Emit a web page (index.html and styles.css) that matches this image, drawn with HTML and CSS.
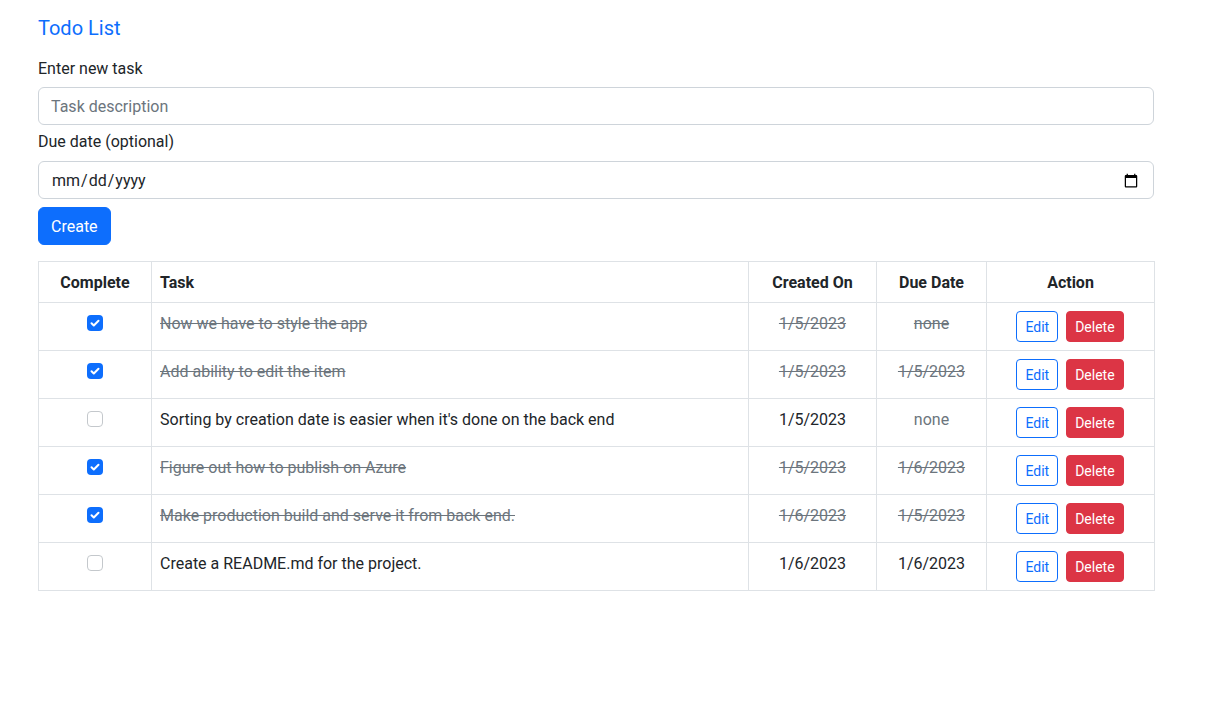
FILE: index.html
```html
<!DOCTYPE html>
<html lang="en">
<head>
<meta charset="utf-8">
<title>Todo List</title>
<link rel="stylesheet" href="styles.css">
</head>
<body>
<div class="container">
  <h1 class="title">Todo List</h1>
  <form class="new-task">
    <label class="label label-desc" for="desc">Enter new task</label>
    <input class="field field-desc" id="desc" type="text" placeholder="Task description">
    <label class="label label-date" for="due">Due date (optional)</label>
    <input class="field field-date" id="due" type="date">
    <button class="btn btn-primary" type="button">Create</button>
  </form>
  <table class="todo-table">
    <colgroup>
      <col class="c-complete"><col class="c-task"><col class="c-created"><col class="c-due"><col class="c-action">
    </colgroup>
    <thead>
      <tr>
        <th class="center">Complete</th>
        <th>Task</th>
        <th class="center">Created On</th>
        <th class="center">Due Date</th>
        <th class="center">Action</th>
      </tr>
    </thead>
    <tbody>
      <tr class="done">
        <td class="center"><span class="check checked"><svg viewBox="0 0 16 16" width="16" height="16"><rect x="0" y="0" width="16" height="16" rx="4" fill="#0d6efd"/><path d="M4.5 8.2l2.3 2.3 4.7-4.7" fill="none" stroke="#fff" stroke-width="2" stroke-linecap="round" stroke-linejoin="round"/></svg></span></td>
        <td><span class="strike">Now we have to style the app</span></td>
        <td class="center"><span class="strike">1/5/2023</span></td>
        <td class="center"><span class="strike">none</span></td>
        <td class="center action-cell"><div class="actions"><button class="btn btn-sm btn-outline" type="button">Edit</button><button class="btn btn-sm btn-danger" type="button">Delete</button></div></td>
      </tr>
      <tr class="done">
        <td class="center"><span class="check checked"><svg viewBox="0 0 16 16" width="16" height="16"><rect x="0" y="0" width="16" height="16" rx="4" fill="#0d6efd"/><path d="M4.5 8.2l2.3 2.3 4.7-4.7" fill="none" stroke="#fff" stroke-width="2" stroke-linecap="round" stroke-linejoin="round"/></svg></span></td>
        <td><span class="strike">Add ability to edit the item</span></td>
        <td class="center"><span class="strike">1/5/2023</span></td>
        <td class="center"><span class="strike">1/5/2023</span></td>
        <td class="center action-cell"><div class="actions"><button class="btn btn-sm btn-outline" type="button">Edit</button><button class="btn btn-sm btn-danger" type="button">Delete</button></div></td>
      </tr>
      <tr>
        <td class="center"><span class="check"><svg viewBox="0 0 16 16" width="16" height="16"><rect x="0.5" y="0.5" width="15" height="15" rx="3.5" fill="#fff" stroke="#c4c8cc"/></svg></span></td>
        <td>Sorting by creation date is easier when it's done on the back end</td>
        <td class="center">1/5/2023</td>
        <td class="center muted">none</td>
        <td class="center action-cell"><div class="actions"><button class="btn btn-sm btn-outline" type="button">Edit</button><button class="btn btn-sm btn-danger" type="button">Delete</button></div></td>
      </tr>
      <tr class="done">
        <td class="center"><span class="check checked"><svg viewBox="0 0 16 16" width="16" height="16"><rect x="0" y="0" width="16" height="16" rx="4" fill="#0d6efd"/><path d="M4.5 8.2l2.3 2.3 4.7-4.7" fill="none" stroke="#fff" stroke-width="2" stroke-linecap="round" stroke-linejoin="round"/></svg></span></td>
        <td><span class="strike">Figure out how to publish on Azure</span></td>
        <td class="center"><span class="strike">1/5/2023</span></td>
        <td class="center"><span class="strike">1/6/2023</span></td>
        <td class="center action-cell"><div class="actions"><button class="btn btn-sm btn-outline" type="button">Edit</button><button class="btn btn-sm btn-danger" type="button">Delete</button></div></td>
      </tr>
      <tr class="done">
        <td class="center"><span class="check checked"><svg viewBox="0 0 16 16" width="16" height="16"><rect x="0" y="0" width="16" height="16" rx="4" fill="#0d6efd"/><path d="M4.5 8.2l2.3 2.3 4.7-4.7" fill="none" stroke="#fff" stroke-width="2" stroke-linecap="round" stroke-linejoin="round"/></svg></span></td>
        <td><span class="strike">Make production build and serve it from back end.</span></td>
        <td class="center"><span class="strike">1/6/2023</span></td>
        <td class="center"><span class="strike">1/5/2023</span></td>
        <td class="center action-cell"><div class="actions"><button class="btn btn-sm btn-outline" type="button">Edit</button><button class="btn btn-sm btn-danger" type="button">Delete</button></div></td>
      </tr>
      <tr>
        <td class="center"><span class="check"><svg viewBox="0 0 16 16" width="16" height="16"><rect x="0.5" y="0.5" width="15" height="15" rx="3.5" fill="#fff" stroke="#c4c8cc"/></svg></span></td>
        <td>Create a README.md for the project.</td>
        <td class="center">1/6/2023</td>
        <td class="center">1/6/2023</td>
        <td class="center action-cell"><div class="actions"><button class="btn btn-sm btn-outline" type="button">Edit</button><button class="btn btn-sm btn-danger" type="button">Delete</button></div></td>
      </tr>
    </tbody>
  </table>
</div>
</body>
</html>
```

FILE: styles.css
```css
* { box-sizing: border-box; }

html, body {
  margin: 0;
  padding: 0;
  background: #fff;
}

body {
  font-family: "Segoe UI", Roboto, "Noto Sans", sans-serif;
  font-size: 16px;
  line-height: 24px;
  color: #212529;
}

.container {
  width: 1116px;
  margin-left: 38px;
  padding-top: 16px;
}

.title {
  margin: 0 0 15px;
  font-size: 20px;
  line-height: 24px;
  font-weight: 400;
  color: #0d6efd;
}

.new-task {
  display: flex;
  flex-direction: column;
  align-items: flex-start;
}

.label {
  display: block;
  padding-top: 2px;
  margin-bottom: 6px;
}

.label-date { margin-bottom: 7px; }

.field {
  display: block;
  width: 100%;
  height: 38px;
  padding: 6px 12px;
  font: inherit;
  color: #212529;
  background: #fff;
  border: 1px solid #ced4da;
  border-radius: 6px;
  outline: none;
}

.field::placeholder { color: #6c757d; }

.field-desc { margin-bottom: 3px; }

.field-date {
  margin-bottom: 8px;
  padding: 7px 12px 5px;
}

.btn {
  display: inline-block;
  font: inherit;
  border: 1px solid transparent;
  border-radius: 6px;
  cursor: pointer;
}

.btn-primary {
  height: 38px;
  padding: 7px 12px 5px;
  color: #fff;
  background: #0d6efd;
  border-color: #0d6efd;
}

.todo-table {
  margin-top: 16px;
  width: 1116px;
  border-collapse: collapse;
  table-layout: fixed;
}

.c-complete { width: 113px; }
.c-task { width: 597px; }
.c-created { width: 128px; }
.c-due { width: 110px; }
.c-action { width: 168px; }

.todo-table th,
.todo-table td {
  border: 1px solid #dee2e6;
  padding: 9px 8px 7px;
  vertical-align: top;
  text-align: left;
}

.todo-table th { font-weight: 700; }

.todo-table .center { text-align: center; }

.todo-table .action-cell { padding: 8px 9px 8px 8px; }

.check {
  display: inline-block;
  width: 16px;
  height: 16px;
  margin-top: 3px;
  vertical-align: top;
}

.check svg { display: block; }

.strike {
  color: #6c757d;
  text-decoration: line-through;
}

.muted { color: #6c757d; }

.actions {
  display: flex;
  justify-content: center;
  gap: 8px;
}

.btn-sm {
  height: 31px;
  padding: 5px 8px 3px;
  font-size: 14px;
  line-height: 21px;
  border-radius: 4px;
}

.btn-outline {
  color: #0d6efd;
  background: #fff;
  border-color: #0d6efd;
}

.btn-danger {
  color: #fff;
  background: #dc3545;
  border-color: #dc3545;
}
```
